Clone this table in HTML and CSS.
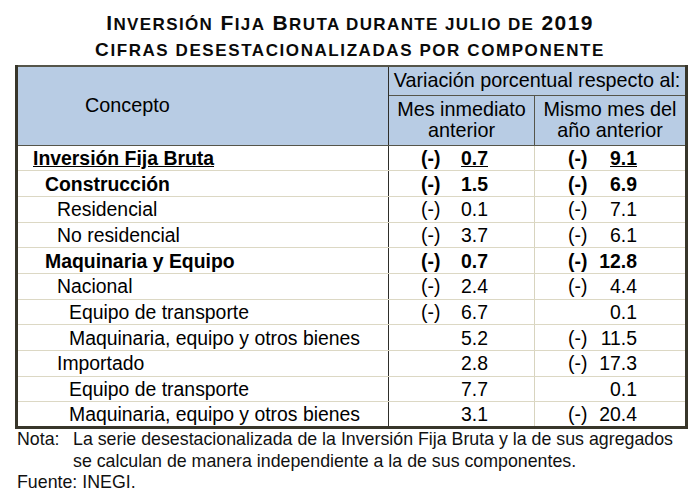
FILE: index.html
```html
<!DOCTYPE html>
<html lang="es">
<head>
<meta charset="utf-8">
<title>Inversión Fija Bruta durante julio de 2019</title>
<link rel="stylesheet" href="styles.css">
</head>
<body>
<div class="page">
  <h1 class="title">
    <span class="line line-1">I<span class="sc">nversión</span> F<span class="sc">ija</span> B<span class="sc">ruta durante julio de</span> 2019</span>
    <span class="line line-2">C<span class="sc">ifras desestacionalizadas por componente</span></span>
  </h1>
  <table class="data">
    <colgroup>
      <col class="col-concept">
      <col class="col-a">
      <col class="col-b">
    </colgroup>
    <thead>
      <tr class="h1">
        <th rowspan="2" class="concept-h">Concepto</th>
        <th colspan="2" class="var-h">Variación porcentual respecto al:</th>
      </tr>
      <tr class="h2">
        <th class="sub-h">Mes inmediato<br>anterior</th>
        <th class="sub-h">Mismo mes del<br>año anterior</th>
      </tr>
    </thead>
    <tbody>
      <tr class="bold">
        <td class="c l0"><u>Inversión Fija Bruta</u></td>
        <td class="n a"><span class="sg">(-)</span><span class="v"><u>0.7</u></span></td>
        <td class="n b"><span class="sg">(-)</span><span class="v"><u>9.1</u></span></td>
      </tr>
      <tr class="bold">
        <td class="c l1">Construcción</td>
        <td class="n a"><span class="sg">(-)</span><span class="v">1.5</span></td>
        <td class="n b"><span class="sg">(-)</span><span class="v">6.9</span></td>
      </tr>
      <tr>
        <td class="c l2">Residencial</td>
        <td class="n a"><span class="sg">(-)</span><span class="v">0.1</span></td>
        <td class="n b"><span class="sg">(-)</span><span class="v">7.1</span></td>
      </tr>
      <tr>
        <td class="c l2">No residencial</td>
        <td class="n a"><span class="sg">(-)</span><span class="v">3.7</span></td>
        <td class="n b"><span class="sg">(-)</span><span class="v">6.1</span></td>
      </tr>
      <tr class="bold">
        <td class="c l1">Maquinaria y Equipo</td>
        <td class="n a"><span class="sg">(-)</span><span class="v">0.7</span></td>
        <td class="n b"><span class="sg">(-)</span><span class="v">12.8</span></td>
      </tr>
      <tr>
        <td class="c l2">Nacional</td>
        <td class="n a"><span class="sg">(-)</span><span class="v">2.4</span></td>
        <td class="n b"><span class="sg">(-)</span><span class="v">4.4</span></td>
      </tr>
      <tr>
        <td class="c l3">Equipo de transporte</td>
        <td class="n a"><span class="sg">(-)</span><span class="v">6.7</span></td>
        <td class="n b"><span class="sg"></span><span class="v">0.1</span></td>
      </tr>
      <tr>
        <td class="c l3">Maquinaria, equipo y otros bienes</td>
        <td class="n a"><span class="sg"></span><span class="v">5.2</span></td>
        <td class="n b"><span class="sg">(-)</span><span class="v">11.5</span></td>
      </tr>
      <tr>
        <td class="c l2">Importado</td>
        <td class="n a"><span class="sg"></span><span class="v">2.8</span></td>
        <td class="n b"><span class="sg">(-)</span><span class="v">17.3</span></td>
      </tr>
      <tr>
        <td class="c l3">Equipo de transporte</td>
        <td class="n a"><span class="sg"></span><span class="v">7.7</span></td>
        <td class="n b"><span class="sg"></span><span class="v">0.1</span></td>
      </tr>
      <tr>
        <td class="c l3">Maquinaria, equipo y otros bienes</td>
        <td class="n a"><span class="sg"></span><span class="v">3.1</span></td>
        <td class="n b"><span class="sg">(-)</span><span class="v">20.4</span></td>
      </tr>
    </tbody>
  </table>
  <div class="notes">
    <div class="note-row">
      <span class="note-label">Nota:</span>
      <span class="note-text">La serie desestacionalizada de la Inversión Fija Bruta y la de sus agregados se calculan de manera independiente a la de sus componentes.</span>
    </div>
    <div class="source">Fuente: INEGI.</div>
  </div>
</div>
</body>
</html>
```
FILE: styles.css
```css
html, body {
  margin: 0;
  padding: 0;
  background: #ffffff;
}

body {
  font-family: "Liberation Sans", Arial, sans-serif;
  color: #000000;
}

.page {
  width: 700px;
  height: 497px;
  padding: 0 15px;
  box-sizing: border-box;
}

.title {
  margin: 0;
  height: 65px;
  box-sizing: border-box;
  padding-top: 11px;
  text-align: center;
  font-weight: bold;
  color: #0a0a0a;
}

.title .line {
  display: block;
}

.title .sc {
  text-transform: uppercase;
  font-size: 17px;
}

.line-1 {
  font-size: 21px;
  line-height: 24px;
  letter-spacing: 1.38px;
}

.line-2 {
  font-size: 19px;
  line-height: 25px;
  letter-spacing: 1.58px;
}

.data {
  width: 670px;
  border-collapse: collapse;
  table-layout: fixed;
  font-size: 19.4px;
  border-top: 2px solid #55554a;
  border-left: 3px solid #38362a;
  border-right: 3px solid #38362a;
  border-bottom: 3px solid #38362a;
}

.col-concept { width: 372px; }
.col-a { width: 146px; }
.col-b { width: 152px; }

thead th {
  background: #b8cce4;
  font-weight: normal;
  padding: 0;
  line-height: 21px;
  font-size: 19.8px;
}

.h1 { height: 29px; }
.h2 { height: 50px; }

.concept-h {
  text-align: left;
  padding-left: 67px !important;
  border-right: 1px solid #2e2e2a;
  border-bottom: 1px solid #55554a;
}

.var-h {
  text-align: center;
  border-bottom: 1px solid #55554a;
}

.sub-h {
  text-align: center;
  vertical-align: middle;
  border-bottom: 1px solid #55554a;
}

.sub-h + .sub-h {
  border-left: 1px solid #55554a;
}

tbody tr {
  height: 25.7px;
}

tbody td {
  padding: 0;
  border-bottom: 1px solid #dcd8c4;
  line-height: 22px;
  white-space: nowrap;
}

tbody tr:last-child td {
  border-bottom: none;
}

.bold td {
  font-weight: bold;
}

.c {
  border-right: 1px solid #2e2e2a;
}

.l0 { padding-left: 15px; }
.l1 { padding-left: 27px; }
.l2 { padding-left: 39px; }
.l3 { padding-left: 51px; }

.n.a {
  padding-left: 32px;
  padding-right: 46px;
  border-right: 1px solid #d8d4bf;
}

.n.b {
  padding-left: 33px;
  padding-right: 48px;
}

.n .sg,
.n .v {
  display: inline-block;
  vertical-align: top;
}

.n .sg {
  width: 19px;
}

.n.a .v {
  width: 48px;
  text-align: right;
}

.n.b .v {
  width: 50px;
  text-align: right;
}

.notes {
  font-size: 17.8px;
  line-height: 21.5px;
  margin-left: 2px;
  color: #111111;
}

.note-row {
  display: flex;
}

.note-label {
  flex: 0 0 56px;
}

.note-text {
  flex: 1 1 auto;
  min-width: 0;
}
```
